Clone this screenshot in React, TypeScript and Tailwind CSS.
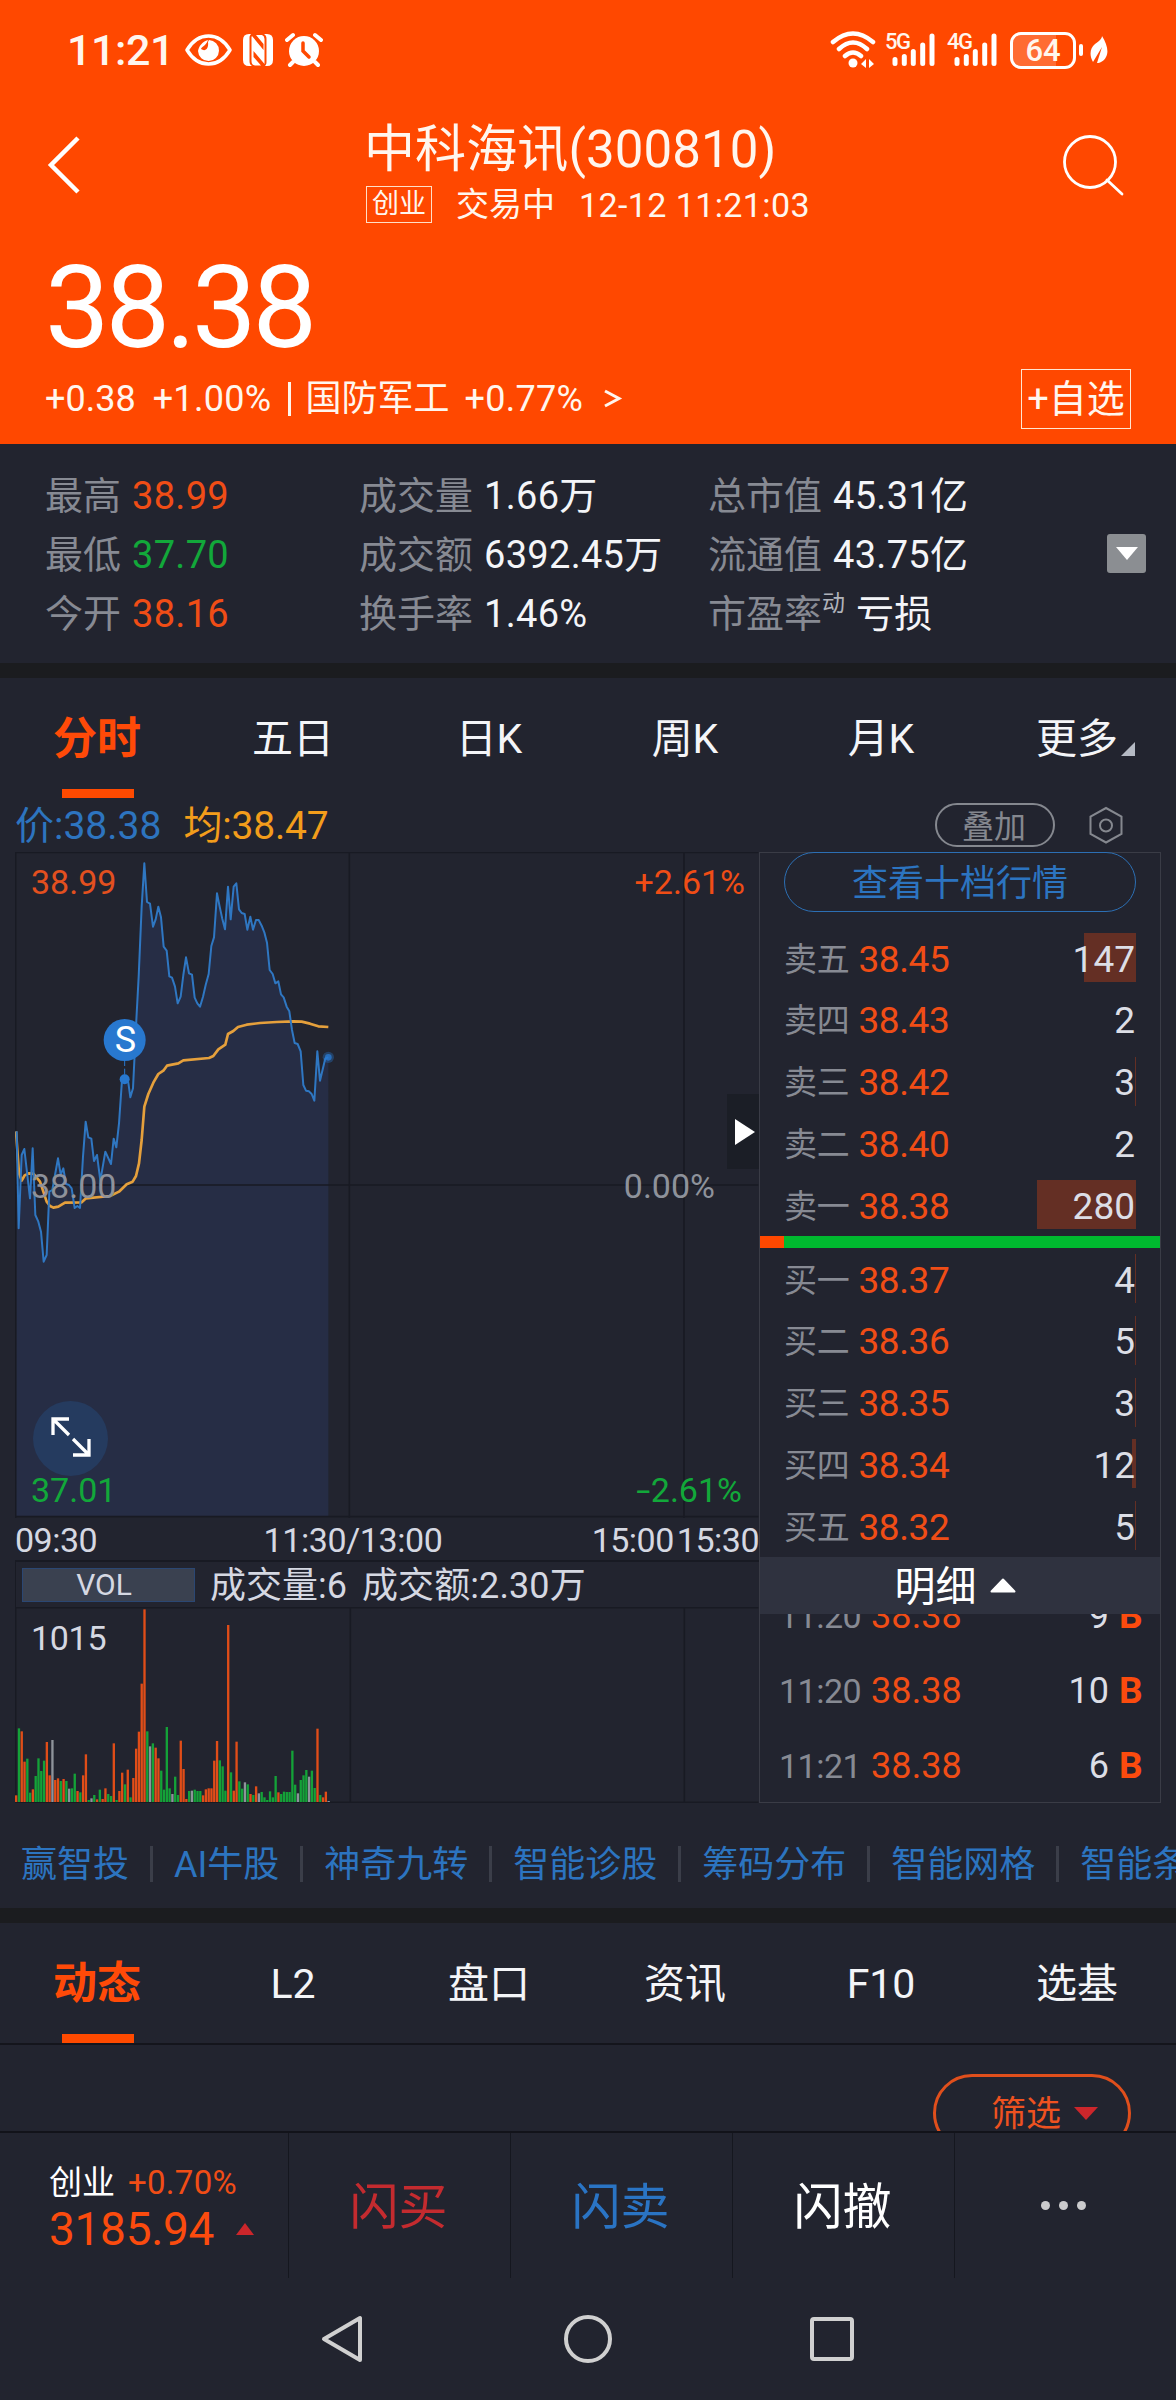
import { clsx } from "clsx";

const periodTabs = ["分时", "五日", "日K", "周K", "月K", "更多"];
const infoTabs = ["动态", "L2", "盘口", "资讯", "F10", "选基"];
const tools = ["赢智投", "AI牛股", "神奇九转", "智能诊股", "筹码分布", "智能网格", "智能条件单"];

type Level = { label: string; price: string; volume: number; bar: number };

const asks: Level[] = [
  { label: "卖五", price: "38.45", volume: 147, bar: 52 },
  { label: "卖四", price: "38.43", volume: 2, bar: 0 },
  { label: "卖三", price: "38.42", volume: 3, bar: 1 },
  { label: "卖二", price: "38.40", volume: 2, bar: 0 },
  { label: "卖一", price: "38.38", volume: 280, bar: 99 },
];

const bids: Level[] = [
  { label: "买一", price: "38.37", volume: 4, bar: 1 },
  { label: "买二", price: "38.36", volume: 5, bar: 1 },
  { label: "买三", price: "38.35", volume: 3, bar: 1 },
  { label: "买四", price: "38.34", volume: 12, bar: 4 },
  { label: "买五", price: "38.32", volume: 5, bar: 1 },
];

const trades = [
  { time: "11:20", price: "38.38", volume: 9 },
  { time: "11:20", price: "38.38", volume: 10 },
  { time: "11:21", price: "38.38", volume: 6 },
];

const priceLine =
  "50,874 56,1165 65,945 73,927 90,1075 98,925 106,1125 115,1145 123,1175 131,1265 140,1245 148,1055 157,1050 165,1005 174,955 182,1003 190,985 198,1032 207,1035 215,1045 224,1104 232,1098 240,1104 249,950 257,845 265,892 274,896 282,963 291,945 301,1022 316,935 333,972 341,896 349,922 357,850 366,720 374,717 385,728 391,772 399,745 409,540 416,410 425,200 433,70 441,186 450,191 459,260 467,238 475,200 483,232 491,320 500,332 508,409 516,413 525,440 533,490 542,470 550,405 558,352 567,400 576,404 584,473 592,490 600,500 609,470 617,435 626,402 634,318 642,292 651,160 659,200 667,237 675,268 684,140 692,238 701,140 709,130 717,208 725,219 734,222 742,269 751,230 759,269 768,240 776,240 785,257 793,277 801,308 809,390 818,402 826,430 835,424 843,463 851,472 860,500 868,514 876,570 884,609 893,612 902,634 910,735 918,752 927,754 935,762 943,782 952,634 960,722 976,655 985,652";

const averageLine =
  "48,874 57,1000 65,1022 74,1006 86,1000 100,1001 120,1025 140,1085 150,1098 160,1103 175,1100 195,1088 245,1087 258,1075 330,1068 357,1055 380,1033 398,1025 408,1008 417,970 425,900 433,800 445,762 460,728 475,702 490,692 501,677 535,670 550,661 627,654 640,648 655,628 676,614 684,582 700,573 714,561 740,554 780,549 830,546 880,544 905,545 930,551 955,559 985,561";

// one bar per minute: r = up, g = down, w = flat
const volumes =
  "r20 g221 r212 r121 g130 g28 r38 g78 g131 g93 g124 r180 r80 w186 r66 r71 g63 r69 g63 w40 g41 g85 r33 g29 r80 r143 g6 w11 g21 r8 g37 r9 r41 g24 g18 r176 g6 r33 r88 g53 r97 g14 r72 r160 r211 r355 r578 g212 w167 g176 r163 r131 g94 g37 g225 g41 w24 g76 g21 r184 r99 r9 g33 w34 g37 g33 g33 r20 r38 r41 r41 r124 r183 g125 g107 g34 r531 g89 r34 r181 g62 g40 w59 g53 r24 g21 r47 w26 g30 g14 g6 g32 g14 g78 r29 g24 g31 g30 g30 g154 g52 w26 g66 g80 g96 w76 g94 g42 r220 g21 r14 r31 w3".split(
    " "
  );

const volumeColors: Record<string, string> = {
  r: "#e14d18",
  g: "#14a238",
  w: "#8e939b",
};

function Signal({ label }: { label: string }) {
  return (
    <div className="relative h-[36px] w-[50px]">
      <span className="absolute top-0 left-0 text-[22px] leading-[19px] font-medium tracking-[-1.5px]">
        {label}
      </span>
      <svg className="absolute inset-0" width="50" height="36" viewBox="0 0 50 36" stroke="white" strokeWidth="5" strokeLinecap="round">
        <path d="M10 27.5V31.5M19.3 24.5V31.5M28.3 19.5V31.5M37.7 13V31.5M47 4V31.5" />
      </svg>
    </div>
  );
}

function StatusBar() {
  return (
    <div className="flex h-[100px] items-center pl-[67px] pr-[68px]">
      <span className="w-[117px] text-[43px] leading-none font-medium tracking-[-0.4px]">11:21</span>
      <svg width="48" height="34" viewBox="0 0 48 34" fill="none">
        <path d="M3 17C9 7 17 3 24.500 3S40 7 46 17C40 27 32 31 24.500 31S9 27 3 17Z" stroke="white" strokeWidth="3.500" strokeLinejoin="round" />
        <path d="M14 18C15 13 18 9 24 7C22 13 18 13 17 16C21 19 25 16 24 9L25 7A10.500 10.500 0 1 1 14 18Z" fill="white" />
      </svg>
      <svg className="ml-[11px]" width="30" height="32" viewBox="0 0 30 32">
        <path d="M6 0H8C6.500 1.500 6.500 3 6.500 5V27C6.500 29 7 31 9 32H6Q0 32 0 26V6Q0 0 6 0Z" fill="white" />
        <path d="M24 32H22C23.500 30.500 23.500 29 23.500 27V5C23.500 3 23 1 21 0H24Q30 0 30 6V26Q30 32 24 32Z" fill="white" />
        <path d="M9 2L20.500 16V10L13 1H19Q21.500 2 21.500 5V30L10.500 17V23L18 31.500H12Q8.500 31 8.500 27V3Z" fill="white" />
      </svg>
      <svg className="ml-[12px]" width="38" height="36" viewBox="0 0 38 36">
        <circle cx="19" cy="19" r="15" fill="white" />
        <path d="M2 8L8 3M36 8L30 3M8 30L5 33M30 30L33 33" stroke="white" strokeWidth="4" strokeLinecap="round" />
        <path d="M18 11V19L24 25" fill="none" stroke="#ff4800" strokeWidth="3.500" strokeLinecap="round" />
      </svg>
      <div className="ml-auto flex items-center">
        <svg width="46" height="38" viewBox="0 0 46 38" fill="none" stroke="white" strokeWidth="4.500" strokeLinecap="round">
          <path d="M3 11Q23-6 43 11M9 18Q23 5 37 18M15 25Q23 18 31 25" />
          <circle cx="23" cy="32" r="4.500" fill="white" stroke="none" />
          <path d="M31 33L36 28V37ZM44 33L39 28V37Z" fill="white" stroke="none" />
        </svg>
        <div className="ml-[9px] flex gap-[12px]">
          <Signal label="5G" />
          <Signal label="4G" />
        </div>
        <div className="relative ml-[13px] flex h-[37px] w-[66px] items-center justify-center overflow-hidden rounded-[11px] border-[3px] border-white text-[31px] leading-none font-medium">
          <div className="absolute inset-y-0 left-0 w-[43px] bg-white/20" />
          <span className="relative">64</span>
        </div>
        <div className="ml-[3px] h-[12px] w-[4px] rounded-full bg-white" />
        <svg className="ml-[7px]" width="18" height="29" viewBox="0 0 18 29">
          <path d="M12 0C17 8 19 16 16 21C14 25 10 27 7 27L12 11L3 26C-1 19 0 12 5 8C9 5 12 3 12 0Z" fill="white" />
        </svg>
      </div>
    </div>
  );
}

function Header() {
  return (
    <header className="h-[444px] bg-[#ff4800] text-[#fff6ee]">
      <StatusBar />
      <div className="flex h-[130px] pl-[46px] pr-[51px]">
        <svg className="mt-[35px]" width="36" height="60" viewBox="0 0 36 60" fill="none" stroke="white" strokeWidth="4.500">
          <path d="M32 3L5 30L32 57" />
        </svg>
        <div className="ml-[282px] flex-1">
          <h1 className="mt-[24px] text-[51px] leading-none tracking-[0.1px]">
            中科海讯(300810)
          </h1>
          <div className="mt-[11px] ml-[2px] flex items-center leading-none">
            <span className="flex h-[37px] w-[66px] items-center justify-center border border-[#ffe0c8] text-[27px]">
              创业
            </span>
            <span className="ml-[24px] text-[33px]">交易中</span>
            <span className="ml-[24px] text-[34px] tracking-[0.4px]">12-12 11:21:03</span>
          </div>
        </div>
        <svg className="mt-[34px]" width="64" height="64" viewBox="0 0 64 64" fill="none" stroke="white" strokeWidth="2.800" strokeLinecap="round">
          <circle cx="29" cy="28" r="25.500" />
          <path d="M46 46L61 60" />
        </svg>
      </div>
      <div className="pl-[45px] text-[115px] leading-[156px] tracking-[-4.200px] text-white">
        38.38
      </div>
      <div className="mt-[-17px] flex h-[60px] items-center pl-[45px] pr-[45px] text-[36px] leading-none">
        <span>+0.38</span>
        <span className="ml-[17px] tracking-[0.3px]">+1.00%</span>
        <span className="ml-[17px] h-[34px] w-[3px] bg-[#fff6ee]" />
        <span className="ml-[14px]">国防军工</span>
        <span className="ml-[15px] tracking-[0.3px]">+0.77%</span>
        <svg className="ml-[20px]" width="20" height="20" viewBox="0 0 20 20" fill="none" stroke="currentColor" strokeWidth="3">
          <path d="M2 2L16 9.500L2 17" />
        </svg>
        <span className="ml-auto flex h-[60px] w-[110px] items-center justify-center border-[1.500px] border-[#ffe6d2] text-[38px]">
          +自选
        </span>
      </div>
    </header>
  );
}

function Stat({ label, value, color = "text-[#f4f5f8]", sup }: { label: string; value: string; color?: string; sup?: string }) {
  return (
    <div className="flex h-[59px] items-center whitespace-nowrap">
      <span className="text-[#878a93]">{label}</span>
      {sup && <sup className="top-[-10px] text-[23px] leading-none text-[#b0b3bb]">{sup}</sup>}
      <span className={clsx("ml-[11px] tracking-[0.3px]", color)}>{value}</span>
    </div>
  );
}

function Stats() {
  return (
    <section className="flex h-[219px] pt-[22px] pl-[45px] pr-[30px] text-[38px] leading-none">
      <div className="w-[314px]">
        <Stat label="最高" value="38.99" color="text-[#f04d16]" />
        <Stat label="最低" value="37.70" color="text-[#12a83a]" />
        <Stat label="今开" value="38.16" color="text-[#f04d16]" />
      </div>
      <div className="w-[349px]">
        <Stat label="成交量" value="1.66万" />
        <Stat label="成交额" value="6392.45万" />
        <Stat label="换手率" value="1.46%" />
      </div>
      <div>
        <Stat label="总市值" value="45.31亿" />
        <Stat label="流通值" value="43.75亿" />
        <Stat label="市盈率" sup="动" value="亏损" />
      </div>
      <div className="mt-[68px] ml-auto flex h-[39px] w-[39px] items-center justify-center rounded-[3px] bg-[#8b8e92]">
        <svg width="22" height="13" viewBox="0 0 22 13">
          <path d="M0 0H22L11 13Z" fill="white" />
        </svg>
      </div>
    </section>
  );
}

function Tabs({ items, more }: { items: string[]; more?: boolean }) {
  return (
    <nav className="grid h-[120px] grid-cols-6">
      {items.map((item, i) => (
        <div key={item} className="relative flex items-center justify-center text-[41px] leading-none text-[#f4f5f8]">
          <span className={clsx("pt-[2px] pr-[2px]", i === 0 && "text-[44px] font-bold text-[#ff4a08]")}>
            {item}
          </span>
          {i === 0 && <div className="absolute bottom-0 h-[9px] w-[72px] bg-[#ff4a00]" />}
          {more && i === 5 && (
            <svg className="absolute right-[41px] bottom-[42px]" width="14" height="14" viewBox="0 0 14 14">
              <path d="M14 0V14H0Z" fill="#b5bac4" />
            </svg>
          )}
        </div>
      ))}
    </nav>
  );
}

function PriceChart() {
  return (
    <div className="relative h-[666px] text-[34px] leading-none">
      <svg width="744" height="666" viewBox="45 36 2232 1998" fill="none">
        <polygon points={`48,2030 ${priceLine} 985,2030`} fill="#262d45" />
        <path d="M47 37H2275M47 36V2034M1048 36V2034M2052 36V2034M47 1035H2275M47 2030H2275" stroke="#181a23" strokeWidth="5" />
        <polyline points={averageLine} stroke="#e5a03c" strokeWidth="8" strokeLinejoin="round" />
        <polyline points={priceLine} stroke="#2f77c2" strokeWidth="6" strokeLinejoin="round" />
        <circle cx="985" cy="652" r="17" fill="#2878cf" opacity="0.35" />
        <circle cx="985" cy="652" r="10" fill="#2878cf" opacity="0.8" />
        <path d="M374 660V705" stroke="#2878cf" strokeWidth="3" strokeDasharray="18 8" />
        <circle cx="374" cy="718" r="15" fill="#2878cf" />
        <circle cx="374" cy="600" r="63" fill="#2878cf" />
      </svg>
      <span className="absolute top-[170px] left-[97px] w-[27px] text-center text-[36px] text-white">S</span>
      <span className="absolute top-[13px] left-[16px] text-[#e3501f]">38.99</span>
      <span className="absolute top-[317px] left-[16px] text-[#8e929b]">38.00</span>
      <span className="absolute top-[621px] left-[16px] text-[#12a83a]">37.01</span>
      <span className="absolute top-[13px] right-[14px] text-[#f04d16]">+2.61%</span>
      <span className="absolute top-[317px] right-[44px] text-[#8e929b]">0.00%</span>
      <span className="absolute top-[621px] right-[17px] flex items-center text-[#12a83a]">
        <span className="inline-block origin-right scale-x-150">-</span>2.61%
      </span>
      <div className="absolute top-[242px] right-0 flex h-[75px] w-[32px] items-center justify-end bg-[#1b1e26] pr-[4px]">
        <svg width="20" height="26" viewBox="0 0 20 26">
          <path d="M0 0L20 13L0 26Z" fill="white" />
        </svg>
      </div>
      <div className="absolute top-[549px] left-[18px] flex h-[75px] w-[75px] items-center justify-center rounded-full bg-[#253b5f]">
        <svg className="mt-[-3px]" width="40" height="40" viewBox="0 0 40 40" fill="none" stroke="white" strokeWidth="3.300">
          <path d="M18 2H2V18M2 2L18 18M22 38H38V22M38 38L22 22" />
        </svg>
      </div>
    </div>
  );
}

function VolumeChart() {
  return (
    <div className="relative h-[196px]">
      <svg width="744" height="196" viewBox="45 81 2232 588">
        <path d="M47 83H2275M47 81V669M1051 81V669M2053 81V669M47 667H2275" stroke="#181a23" strokeWidth="5" />
        {volumes.map((v, i) => {
          const height = Number(v.slice(1));
          return (
            <rect
              key={i}
              x={45 + i * 8.37}
              y={666 - height}
              width="7"
              height={height}
              fill={volumeColors[v[0]]}
            />
          );
        })}
      </svg>
      <span className="absolute top-[14px] left-[16px] text-[34px] leading-none tracking-[-0.3px] text-[#d5d8e2]">1015</span>
    </div>
  );
}

function LevelRow({ label, price, volume, bar }: Level) {
  return (
    <div className="relative flex h-[49px] items-center pt-[3px] text-[37px] tracking-[-0.4px]">
      <div className="absolute inset-y-0 right-0 bg-[#642f24]" style={{ width: bar }} />
      <span className="text-[33px] tracking-[-0.3px] text-[#878a93]">{label}</span>
      <span className="ml-[9px] text-[#f04d16]">{price}</span>
      <span className="relative ml-auto pr-[1px] tracking-normal text-[#dcdee6]">{volume}</span>
    </div>
  );
}

function OrderBook() {
  return (
    <div className="flex h-[951px] w-[402px] flex-col border border-[#3a3c46] leading-none">
      <div className="mx-[24px] mt-[-1px] flex h-[60px] items-center justify-center rounded-full border border-[#2c6fb4] pt-[4px] text-[36px] text-[#2c74c0]">
        查看十档行情
      </div>
      <div className="mt-[21px] flex flex-col gap-[12.750px] px-[24px]">
        {asks.map((level) => (
          <LevelRow key={level.label} {...level} />
        ))}
      </div>
      <div className="mt-[7px] flex h-[12px] bg-[#00b92f]">
        <div className="w-[24px] bg-[#ff4800]" />
      </div>
      <div className="mt-[6px] flex flex-col gap-[12.750px] px-[24px]">
        {bids.map((level) => (
          <LevelRow key={level.label} {...level} />
        ))}
      </div>
      <div className="mt-[7px] flex h-[57px] shrink-0 items-center justify-center bg-[#2f323f] text-[41px] text-white">
        <span className="ml-[-10px] pt-[4px]">明细</span>
        <svg className="ml-[13px]" width="26" height="15" viewBox="0 0 26 15">
          <path d="M13 1.500L24.500 13.500H1.500Z" fill="white" stroke="white" strokeWidth="2" strokeLinejoin="round" />
        </svg>
      </div>
      <div className="flex-1 overflow-hidden">
        <div className="mt-[-36px] pr-[16px] pl-[19px]">
          {trades.map((trade, i) => (
            <div key={i} className="flex h-[75px] items-center text-[36px]">
              <span className="w-[92px] text-[34px] tracking-[-0.5px] text-[#878a93]">{trade.time}</span>
              <span className="tracking-[0.1px] text-[#f04d16]">{trade.price}</span>
              <span className="ml-auto text-[#dcdee6]">{trade.volume}</span>
              <span className="ml-[10px] w-[25px] text-[37px] font-bold text-[#fb4b0e]">B</span>
            </div>
          ))}
        </div>
      </div>
    </div>
  );
}

function Footer() {
  return (
    <footer>
      <div className="flex h-[147px] border-t-[2px] border-[#12131a] text-[49px] leading-none">
        <div className="w-[288px] pt-[33px] pl-[49px]">
          <div className="flex items-center text-[33px]">
            <span className="text-white">创业</span>
            <span className="ml-[13px] tracking-[0.3px] text-[#f04d16]">+0.70%</span>
          </div>
          <div className="mt-[7px] flex items-center text-[46px] text-[#fb4b0e]">
            <span className="tracking-[-0.3px]">3185.94</span>
            <svg className="ml-[22px]" width="18" height="12" viewBox="0 0 18 12">
              <path d="M9 0L18 12H0Z" fill="#cc262b" />
            </svg>
          </div>
        </div>
        <div className="flex w-[222px] items-center justify-center border-l border-[#15171f] pt-[3px] pr-[2px] text-[#c42b2f]">闪买</div>
        <div className="flex w-[222px] items-center justify-center border-l border-[#15171f] pt-[3px] pr-[2px] text-[#2a74c4]">闪卖</div>
        <div className="flex w-[222px] items-center justify-center border-l border-[#15171f] pt-[3px] pr-[2px] text-white">闪撤</div>
        <div className="flex flex-1 items-center justify-center gap-[9px] border-l border-[#15171f] pr-[4px]">
          <i className="size-[9px] rounded-full bg-[#cbcbcd]" />
          <i className="size-[9px] rounded-full bg-[#cbcbcd]" />
          <i className="size-[9px] rounded-full bg-[#cbcbcd]" />
        </div>
      </div>
      <div className="flex h-[122px] items-center pl-[320px]">
        <svg width="44" height="50" viewBox="0 0 44 50" fill="none" stroke="#d0d0d0" strokeWidth="4" strokeLinejoin="round">
          <path d="M40 4V46L4 25Z" />
        </svg>
        <div className="ml-[200px] size-[48px] rounded-full border-[4px] border-[#d0d0d0]" />
        <div className="ml-[198px] size-[44px] rounded-[4px] border-[4px] border-[#d0d0d0]" />
      </div>
    </footer>
  );
}

export default function App() {
  return (
    <div className="h-[2400px] w-[1176px] overflow-hidden bg-[#22242f] font-['Roboto','Noto_Sans_CJK_SC',sans-serif]">
      <Header />
      <Stats />
      <div className="h-[15px] bg-[#1b1c1f]" />
      <Tabs items={periodTabs} more />

      {/* Price / average legend */}
      <div className="flex h-[54px] items-center pl-[15px] pr-[53px] text-[39px] leading-none">
        <span className="pt-[2px] text-[#2d74bf]">价:38.38</span>
        <span className="ml-[22px] pt-[2px] tracking-[-0.2px] text-[#f39d1b]">均:38.47</span>
        <span className="ml-auto flex h-[44px] w-[120px] items-center justify-center rounded-full border-2 border-[#85888f] pt-[3px] pr-[2px] text-[32px] text-[#85888f]">
          叠加
        </span>
        <svg className="ml-[34px]" width="34" height="38" viewBox="0 0 34 38" fill="none" stroke="#85888f" strokeWidth="2">
          <path d="M17 2L32.500 10.500V28L17 36.500L1.500 28V10.500Z" />
          <circle cx="17" cy="19.500" r="6" />
        </svg>
      </div>

      <div className="flex pl-[15px]">
        <div className="w-[744px]">
          <PriceChart />
          <div className="flex h-[42px] items-center pt-[2px] text-[34px] leading-none tracking-[-0.5px] text-[#d5d8e2]">
            <span className="w-[248px]">09:30</span>
            <span className="w-[180px] text-center tracking-[-0.4px] whitespace-nowrap">11:30/13:00</span>
            <span className="ml-auto">15:00</span>
            <span className="ml-[3px]">15:30</span>
          </div>
          <div className="flex h-[47px] items-center border-t-[2px] border-l border-[#181a23] pl-[6px] text-[36px] leading-none text-[#d5d8e2]">
            <span className="flex h-[34px] w-[173px] items-center justify-center border border-[#2b4773] bg-[#3a4150] pr-[9px] text-[30px]">
              VOL
            </span>
            <span className="ml-[15px] pt-[2px]">成交量:6</span>
            <span className="ml-[15px] pt-[2px] tracking-[0.1px]">成交额:2.30万</span>
          </div>
          <VolumeChart />
        </div>
        <OrderBook />
      </div>

      {/* Tool shortcuts */}
      <div className="flex h-[105px] items-center gap-[21px] overflow-hidden pt-[16px] pl-[21px] text-[36px] leading-none whitespace-nowrap text-[#2c74c0]">
        {tools.map((tool, i) => (
          <div key={tool} className="flex shrink-0 items-center gap-[21px]">
            {i > 0 && <i className="h-[36px] w-[3px] bg-[#3b3e49]" />}
            <span className="pt-[2px]">{tool}</span>
          </div>
        ))}
      </div>
      <div className="h-[15px] bg-[#1b1c1f]" />
      <Tabs items={infoTabs} />

      <div className="flex h-[88px] justify-end overflow-hidden border-t-[2px] border-[#14151c] pt-[29px] pr-[45px]">
        <div className="flex h-[78px] w-[198px] items-center justify-center rounded-full border-[3px] border-[#e04f1c] pl-[25px] text-[35px] leading-none text-[#ee5220]">
          <span className="pt-[2px]">筛选</span>
          <svg className="ml-[13px]" width="24" height="13" viewBox="0 0 24 13">
            <path d="M0 0H24L12 13Z" fill="#cc262b" />
          </svg>
        </div>
      </div>
      <Footer />
    </div>
  );
}
